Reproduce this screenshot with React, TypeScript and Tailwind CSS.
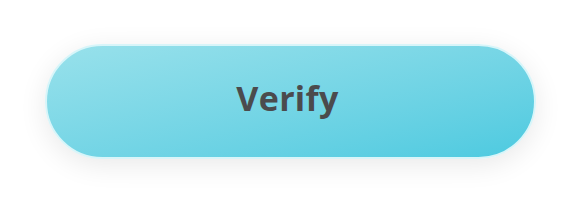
import React from 'react';

export default function App() {
  return (
    <div className="w-[580px] h-[204px] bg-white pl-[45px] pt-[44px]">
      <button
        className="flex items-center justify-center w-[491px] h-[115px] rounded-full border-2 border-[#d8f5f9] bg-gradient-to-br from-[#98e1eb] to-[#4ccae0] shadow-[0_6px_28px_rgba(0,0,0,0.09)]"
      >
        <span
          className="text-[34px] leading-none font-bold text-[#4b4b4d] -mt-[8px] -ml-[6px] tracking-[0.3px]"
          style={{ fontFamily: '"Open Sans", "Noto Sans", sans-serif' }}
        >
          Verify
        </span>
      </button>
    </div>
  );
}
